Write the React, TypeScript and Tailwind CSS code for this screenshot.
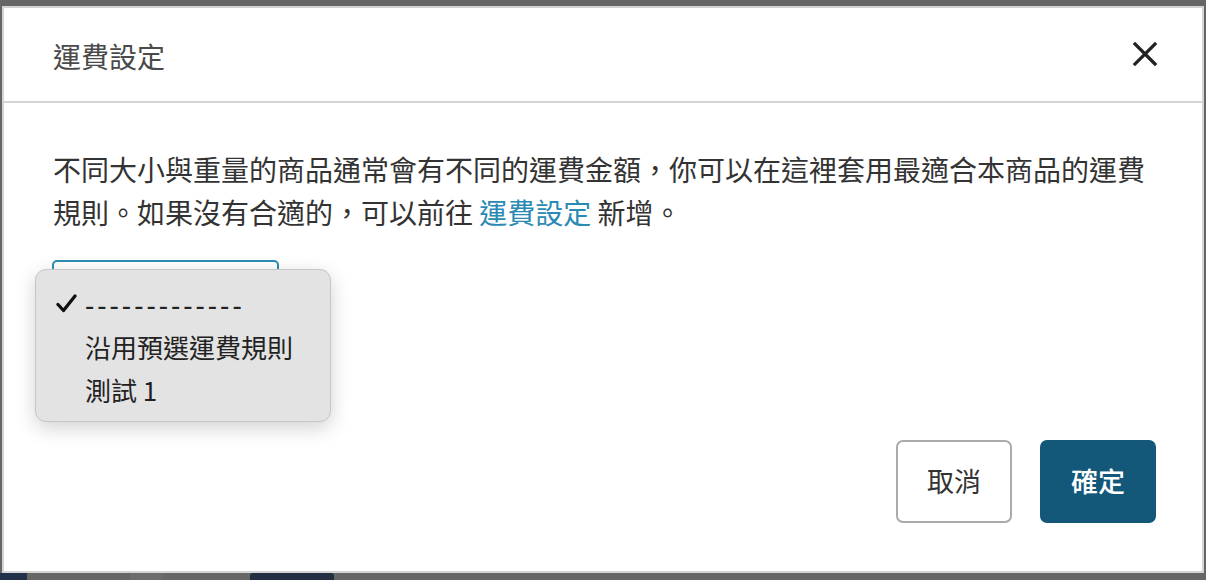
const font = { fontFamily: '"Noto Sans CJK TC", "Liberation Sans", sans-serif' };

function CloseIcon() {
  return (
    <svg width="26" height="26" viewBox="0 0 26 26" fill="none">
      <path d="M3 3 L23 23 M23 3 L3 23" stroke="#222222" strokeWidth="3.2" strokeLinecap="square" />
    </svg>
  );
}

function CheckIcon() {
  return (
    <svg width="21" height="19" viewBox="0 0 21 19" fill="none">
      <path d="M2 10.5 L7.5 16.5 L19 2" stroke="#111111" strokeWidth="3.3" strokeLinecap="round" strokeLinejoin="round" />
    </svg>
  );
}

const options = ['-------------', '沿用預選運費規則', '測試 1'];

export default function App() {
  return (
    <div className="h-[580px] w-full bg-[#666666] flex flex-col" style={font}>
      <div className="h-[6px] shrink-0" />
      <div className="flex-1 flex px-[2px]">
        <div className="relative flex-1 flex flex-col bg-white border-2 border-[#d4d4d4]">
          {/* header */}
          <div className="h-[95px] shrink-0 flex items-center justify-between pl-[49px] pr-[44px] border-b-2 border-[#d4d4d4]">
            <h2 className="text-[28px] text-[#4a4a4a] leading-none pt-[2px]">運費設定</h2>
            <button className="pb-[2px]">
              <CloseIcon />
            </button>
          </div>

          {/* body */}
          <div className="flex-1 flex flex-col px-[49px] pt-[45px]">
            <p className="text-[28px] leading-[43px] text-[#333333]">
              不同大小與重量的商品通常會有不同的運費金額，你可以在這裡套用最適合本商品的運費規則。如果沒有合適的，可以前往{' '}
              <a className="text-[#2a8ab3]">運費設定</a> 新增。
            </p>
            <div className="mt-[26px] w-[227px] h-[48px] -ml-[1px] border-2 border-[#2a8db5] rounded-[5px]" />

            <div className="mt-auto flex justify-end gap-[28px] pb-[48px] -mr-[3px]">
              <button className="w-[116px] h-[83px] rounded-[7px] border-2 border-[#aaaaaa] bg-white text-[27px] text-[#333333]">
                取消
              </button>
              <button className="w-[116px] h-[83px] rounded-[7px] bg-[#135779] text-[27px] font-medium text-white">
                確定
              </button>
            </div>
          </div>

          {/* open select menu */}
          <div className="absolute left-[31px] top-[261px] w-[296px] h-[153px] rounded-[11px] border border-[#c6c6c6] bg-[#e3e3e3] shadow-[0_6px_20px_rgba(0,0,0,0.18)] pt-[12px]">
            {options.map((opt, i) => (
              <div key={opt} className="relative h-[43px] flex items-center pl-[49px] text-[26px] text-[#222222]">
                {i === 0 && (
                  <span className="absolute left-[20px] top-[12px]">
                    <CheckIcon />
                  </span>
                )}
                <span className={i === 0 ? 'tracking-[3px] font-medium' : ''}>{opt}</span>
              </div>
            ))}
          </div>
        </div>
      </div>
      <div className="h-[7px] shrink-0 flex">
        <div className="w-[27px] bg-[#22304a]" />
        <div className="w-[103px] bg-[#666666]" />
        <div className="w-[33px] bg-[#6c6c6c]" />
        <div className="w-[87px] bg-[#666666]" />
        <div className="w-[84px] bg-[#232e42] rounded-t-[3px]" />
        <div className="flex-1 bg-[#666666]" />
      </div>
    </div>
  );
}
